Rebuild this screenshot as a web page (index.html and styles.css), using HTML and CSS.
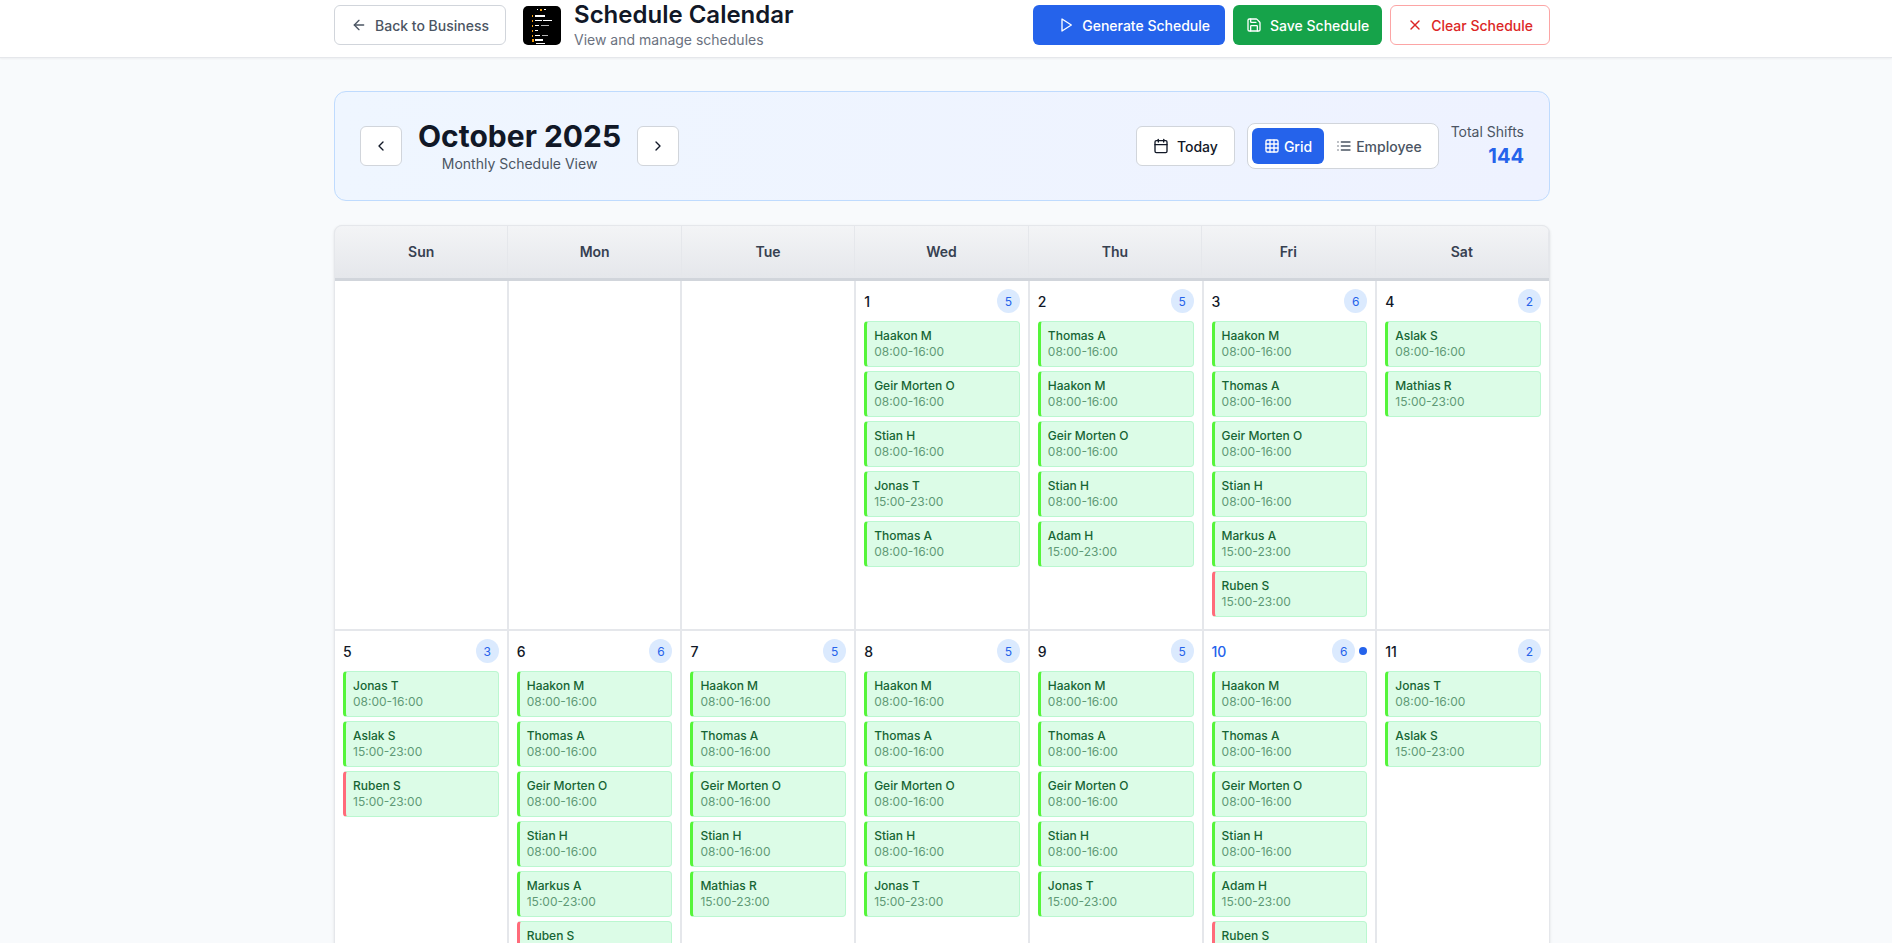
FILE: index.html
```html
<!DOCTYPE html>
<html lang="en">
<head>
    <meta charset="UTF-8">
    <meta name="viewport" content="width=device-width, initial-scale=1.0">
    <title>Schedule Calendar</title>
    <link rel="stylesheet" href="styles.css">
</head>
<body>
    <header class="topbar">
        <div class="wrap topbar_inner">
            <div class="topbar_left">
                <button class="btn btn_outline">
                    <svg class="icon" viewBox="0 0 24 24"><path d="m12 19-7-7 7-7"/><path d="M19 12H5"/></svg>
                    Back to Business
                </button>
                <svg class="logo" viewBox="0 0 38 39">
                    <rect width="38" height="39" rx="5" fill="#000"/>
                    <g fill="#f59e0b">
                        <rect x="17" y="3" width="2" height="2"/>
                        <rect x="9" y="9" width="1" height="2"/>
                        <rect x="9" y="14" width="1" height="2"/>
                        <rect x="9" y="19" width="1" height="2"/>
                        <rect x="9" y="24" width="1" height="2"/>
                        <rect x="9" y="29" width="1" height="2"/>
                        <rect x="9" y="33" width="2" height="3"/>
                    </g>
                    <g fill="#fff">
                        <rect x="14" y="3" width="1" height="1"/>
                        <rect x="21" y="3" width="2" height="1"/>
                        <rect x="12" y="9" width="10" height="2"/>
                        <rect x="12" y="14" width="7" height="1"/>
                        <rect x="20" y="14" width="9" height="1"/>
                        <rect x="12" y="19" width="4" height="1"/>
                        <rect x="18" y="19" width="8" height="1" opacity=".7"/>
                        <rect x="12" y="24" width="3" height="1"/>
                        <rect x="12" y="29" width="5" height="1"/>
                        <rect x="19" y="29" width="6" height="1" opacity=".7"/>
                        <rect x="12" y="33" width="8" height="2"/>
                        <rect x="13" y="37" width="9" height="1"/>
                    </g>
                </svg>
                <div>
                    <h1 class="page_title">Schedule Calendar</h1>
                    <p class="page_sub">View and manage schedules</p>
                </div>
            </div>
            <div class="topbar_right">
                <button class="btn btn_blue">
                    <svg class="icon" viewBox="0 0 24 24"><path d="M6 3v18l14-9z"/></svg>
                    Generate Schedule
                </button>
                <button class="btn btn_green">
                    <svg class="icon" viewBox="0 0 24 24"><path d="M15.2 3a2 2 0 0 1 1.4.6l3.8 3.8a2 2 0 0 1 .6 1.4V19a2 2 0 0 1-2 2H5a2 2 0 0 1-2-2V5a2 2 0 0 1 2-2z"/><path d="M17 21v-7a1 1 0 0 0-1-1H8a1 1 0 0 0-1 1v7"/><path d="M7 3v4a1 1 0 0 0 1 1h7"/></svg>
                    Save Schedule
                </button>
                <button class="btn btn_danger">
                    <svg class="icon" viewBox="0 0 24 24"><path d="M18 6 6 18"/><path d="m6 6 12 12"/></svg>
                    Clear Schedule
                </button>
            </div>
        </div>
    </header>

    <main class="wrap content">
        <section class="month_panel">
            <div class="month_nav">
                <button class="btn btn_square">
                    <svg class="icon" viewBox="0 0 24 24"><path d="m15 18-6-6 6-6"/></svg>
                </button>
                <div class="month_label">
                    <h2 class="month_title">October 2025</h2>
                    <p class="month_sub">Monthly Schedule View</p>
                </div>
                <button class="btn btn_square">
                    <svg class="icon" viewBox="0 0 24 24"><path d="m9 18 6-6-6-6"/></svg>
                </button>
            </div>
            <div class="month_tools">
                <button class="btn btn_today">
                    <svg class="icon" viewBox="0 0 24 24"><path d="M8 2v4"/><path d="M16 2v4"/><rect x="3" y="4" width="18" height="18" rx="2"/><path d="M3 10h18"/></svg>
                    Today
                </button>
                <div class="view_toggle">
                    <button class="toggle_btn toggle_active">
                        <svg class="icon" viewBox="0 0 24 24"><rect x="3" y="3" width="18" height="18" rx="2"/><path d="M3 9h18"/><path d="M3 15h18"/><path d="M9 3v18"/><path d="M15 3v18"/></svg>
                        Grid
                    </button>
                    <button class="toggle_btn">
                        <svg class="icon" viewBox="0 0 24 24"><path d="M3 12h.01"/><path d="M3 18h.01"/><path d="M3 6h.01"/><path d="M8 12h13"/><path d="M8 18h13"/><path d="M8 6h13"/></svg>
                        Employee
                    </button>
                </div>
                <div class="total">
                    <p class="total_label">Total Shifts</p>
                    <p class="total_value">144</p>
                </div>
            </div>
        </section>

        <section class="calendar">
            <div class="weekdays">
                <div class="weekday">Sun</div>
                <div class="weekday">Mon</div>
                <div class="weekday">Tue</div>
                <div class="weekday">Wed</div>
                <div class="weekday">Thu</div>
                <div class="weekday">Fri</div>
                <div class="weekday">Sat</div>
            </div>
            <div class="days">
                <div class="day"></div>
                <div class="day"></div>
                <div class="day"></div>

                <div class="day">
                    <div class="day_head"><span class="day_num">1</span><span class="day_count">5</span></div>
                    <div class="shift"><span class="shift_name">Haakon M</span><span class="shift_time">08:00-16:00</span></div>
                    <div class="shift"><span class="shift_name">Geir Morten O</span><span class="shift_time">08:00-16:00</span></div>
                    <div class="shift"><span class="shift_name">Stian H</span><span class="shift_time">08:00-16:00</span></div>
                    <div class="shift"><span class="shift_name">Jonas T</span><span class="shift_time">15:00-23:00</span></div>
                    <div class="shift"><span class="shift_name">Thomas A</span><span class="shift_time">08:00-16:00</span></div>
                </div>
                <div class="day">
                    <div class="day_head"><span class="day_num">2</span><span class="day_count">5</span></div>
                    <div class="shift"><span class="shift_name">Thomas A</span><span class="shift_time">08:00-16:00</span></div>
                    <div class="shift"><span class="shift_name">Haakon M</span><span class="shift_time">08:00-16:00</span></div>
                    <div class="shift"><span class="shift_name">Geir Morten O</span><span class="shift_time">08:00-16:00</span></div>
                    <div class="shift"><span class="shift_name">Stian H</span><span class="shift_time">08:00-16:00</span></div>
                    <div class="shift"><span class="shift_name">Adam H</span><span class="shift_time">15:00-23:00</span></div>
                </div>
                <div class="day">
                    <div class="day_head"><span class="day_num">3</span><span class="day_count">6</span></div>
                    <div class="shift"><span class="shift_name">Haakon M</span><span class="shift_time">08:00-16:00</span></div>
                    <div class="shift"><span class="shift_name">Thomas A</span><span class="shift_time">08:00-16:00</span></div>
                    <div class="shift"><span class="shift_name">Geir Morten O</span><span class="shift_time">08:00-16:00</span></div>
                    <div class="shift"><span class="shift_name">Stian H</span><span class="shift_time">08:00-16:00</span></div>
                    <div class="shift"><span class="shift_name">Markus A</span><span class="shift_time">15:00-23:00</span></div>
                    <div class="shift shift_red"><span class="shift_name">Ruben S</span><span class="shift_time">15:00-23:00</span></div>
                </div>
                <div class="day">
                    <div class="day_head"><span class="day_num">4</span><span class="day_count">2</span></div>
                    <div class="shift"><span class="shift_name">Aslak S</span><span class="shift_time">08:00-16:00</span></div>
                    <div class="shift"><span class="shift_name">Mathias R</span><span class="shift_time">15:00-23:00</span></div>
                </div>

                <div class="day">
                    <div class="day_head"><span class="day_num">5</span><span class="day_count">3</span></div>
                    <div class="shift"><span class="shift_name">Jonas T</span><span class="shift_time">08:00-16:00</span></div>
                    <div class="shift"><span class="shift_name">Aslak S</span><span class="shift_time">15:00-23:00</span></div>
                    <div class="shift shift_red"><span class="shift_name">Ruben S</span><span class="shift_time">15:00-23:00</span></div>
                </div>
                <div class="day">
                    <div class="day_head"><span class="day_num">6</span><span class="day_count">6</span></div>
                    <div class="shift"><span class="shift_name">Haakon M</span><span class="shift_time">08:00-16:00</span></div>
                    <div class="shift"><span class="shift_name">Thomas A</span><span class="shift_time">08:00-16:00</span></div>
                    <div class="shift"><span class="shift_name">Geir Morten O</span><span class="shift_time">08:00-16:00</span></div>
                    <div class="shift"><span class="shift_name">Stian H</span><span class="shift_time">08:00-16:00</span></div>
                    <div class="shift"><span class="shift_name">Markus A</span><span class="shift_time">15:00-23:00</span></div>
                    <div class="shift shift_red"><span class="shift_name">Ruben S</span><span class="shift_time">15:00-23:00</span></div>
                </div>
                <div class="day">
                    <div class="day_head"><span class="day_num">7</span><span class="day_count">5</span></div>
                    <div class="shift"><span class="shift_name">Haakon M</span><span class="shift_time">08:00-16:00</span></div>
                    <div class="shift"><span class="shift_name">Thomas A</span><span class="shift_time">08:00-16:00</span></div>
                    <div class="shift"><span class="shift_name">Geir Morten O</span><span class="shift_time">08:00-16:00</span></div>
                    <div class="shift"><span class="shift_name">Stian H</span><span class="shift_time">08:00-16:00</span></div>
                    <div class="shift"><span class="shift_name">Mathias R</span><span class="shift_time">15:00-23:00</span></div>
                </div>
                <div class="day">
                    <div class="day_head"><span class="day_num">8</span><span class="day_count">5</span></div>
                    <div class="shift"><span class="shift_name">Haakon M</span><span class="shift_time">08:00-16:00</span></div>
                    <div class="shift"><span class="shift_name">Thomas A</span><span class="shift_time">08:00-16:00</span></div>
                    <div class="shift"><span class="shift_name">Geir Morten O</span><span class="shift_time">08:00-16:00</span></div>
                    <div class="shift"><span class="shift_name">Stian H</span><span class="shift_time">08:00-16:00</span></div>
                    <div class="shift"><span class="shift_name">Jonas T</span><span class="shift_time">15:00-23:00</span></div>
                </div>
                <div class="day">
                    <div class="day_head"><span class="day_num">9</span><span class="day_count">5</span></div>
                    <div class="shift"><span class="shift_name">Haakon M</span><span class="shift_time">08:00-16:00</span></div>
                    <div class="shift"><span class="shift_name">Thomas A</span><span class="shift_time">08:00-16:00</span></div>
                    <div class="shift"><span class="shift_name">Geir Morten O</span><span class="shift_time">08:00-16:00</span></div>
                    <div class="shift"><span class="shift_name">Stian H</span><span class="shift_time">08:00-16:00</span></div>
                    <div class="shift"><span class="shift_name">Jonas T</span><span class="shift_time">15:00-23:00</span></div>
                </div>
                <div class="day">
                    <div class="day_head"><span class="day_num day_today">10</span><span class="day_badges"><span class="day_count">6</span><span class="today_dot"></span></span></div>
                    <div class="shift"><span class="shift_name">Haakon M</span><span class="shift_time">08:00-16:00</span></div>
                    <div class="shift"><span class="shift_name">Thomas A</span><span class="shift_time">08:00-16:00</span></div>
                    <div class="shift"><span class="shift_name">Geir Morten O</span><span class="shift_time">08:00-16:00</span></div>
                    <div class="shift"><span class="shift_name">Stian H</span><span class="shift_time">08:00-16:00</span></div>
                    <div class="shift"><span class="shift_name">Adam H</span><span class="shift_time">15:00-23:00</span></div>
                    <div class="shift shift_red"><span class="shift_name">Ruben S</span><span class="shift_time">15:00-23:00</span></div>
                </div>
                <div class="day">
                    <div class="day_head"><span class="day_num">11</span><span class="day_count">2</span></div>
                    <div class="shift"><span class="shift_name">Jonas T</span><span class="shift_time">08:00-16:00</span></div>
                    <div class="shift"><span class="shift_name">Aslak S</span><span class="shift_time">15:00-23:00</span></div>
                </div>
            </div>
        </section>
    </main>
</body>
</html>
```

FILE: styles.css
```css
html, body {
    height: 100vh;
    overflow: hidden;
}

body {
    margin: 0;
    padding: 0;
    font-family: Inter, "Liberation Sans", sans-serif;
    background-color: #f8fafc;
    color: #111827;
}

h1, h2, p {
    margin: 0;
}

button {
    font-family: inherit;
    cursor: pointer;
}

.wrap {
    width: 1216px;
    margin-left: 334px;
}

.icon {
    width: 16px;
    height: 16px;
    flex-shrink: 0;
    fill: none;
    stroke: currentColor;
    stroke-width: 2;
    stroke-linecap: round;
    stroke-linejoin: round;
}

/* top bar */
.topbar {
    height: 57px;
    background-color: #fff;
    border-bottom: 1px solid #e5e7eb;
    box-shadow: 0 1px 2px rgba(0, 0, 0, 0.05);
}

.topbar_inner {
    display: flex;
    justify-content: space-between;
    padding-top: 5px;
}

.topbar_left {
    display: flex;
    align-items: flex-start;
}

.topbar_right {
    display: flex;
    gap: 8px;
}

.logo {
    width: 38px;
    height: 39px;
    margin: 1px 13px 0 17px;
}

.page_title {
    font-size: 24px;
    line-height: 24px;
    font-weight: 600;
    color: #111827;
    margin-top: -2px;
}

.page_sub {
    font-size: 14px;
    line-height: 20px;
    color: #6b7280;
    margin-top: 3px;
}

/* buttons */
.btn {
    display: flex;
    align-items: center;
    gap: 8px;
    height: 40px;
    padding: 0 16px;
    border: 1px solid transparent;
    border-radius: 6px;
    font-size: 14px;
    font-weight: 500;
    background-color: #fff;
}

.btn_outline {
    border-color: #d1d5db;
    color: #4b5563;
}

.btn_outline .icon {
    stroke: #4b5563;
}

.btn_blue {
    background-color: #2563eb;
    color: #fff;
    padding: 0 14px 0 24px;
}

.btn_green {
    background-color: #16a34a;
    color: #fff;
    padding: 0 12px;
}

.btn_danger {
    border-color: #fca5a5;
    color: #dc2626;
}

.btn_square {
    width: 42px;
    padding: 0;
    justify-content: center;
    border-color: #d1d5db;
    color: #111827;
}

.btn_today {
    border-color: #d1d5db;
    color: #111827;
}

/* month panel */
.month_panel {
    display: flex;
    justify-content: space-between;
    align-items: center;
    height: 110px;
    box-sizing: border-box;
    margin-top: 33px;
    padding: 0 25px;
    border: 1px solid #bfdbfe;
    border-radius: 12px;
    background: linear-gradient(to right, #eff6ff, #eef2ff);
}

.month_nav {
    display: flex;
    align-items: center;
    gap: 16px;
}

.month_label {
    text-align: center;
}

.month_title {
    font-size: 30px;
    line-height: 36px;
    font-weight: 700;
    color: #111827;
}

.month_sub {
    font-size: 14px;
    line-height: 20px;
    color: #4b5563;
}

.month_tools {
    display: flex;
    align-items: center;
    gap: 12px;
}

.view_toggle {
    display: flex;
    padding: 4px;
    border: 1px solid #d1d5db;
    border-radius: 8px;
    background-color: #fff;
}

.toggle_btn {
    display: flex;
    align-items: center;
    gap: 4px;
    height: 36px;
    padding: 0 12px;
    border: 0;
    border-radius: 6px;
    background: none;
    font-size: 14px;
    font-weight: 500;
    color: #4b5563;
}

.toggle_active {
    background-color: #2563eb;
    color: #fff;
}

.total {
    text-align: right;
}

.total_label {
    font-size: 14px;
    line-height: 20px;
    color: #4b5563;
}

.total_value {
    font-size: 20px;
    line-height: 28px;
    font-weight: 700;
    color: #2563eb;
}

/* calendar */
.calendar {
    margin-top: 24px;
    border: 1px solid #e5e7eb;
    border-radius: 8px 8px 0 0;
    background-color: #e5e7eb;
    box-shadow: 0 1px 3px rgba(0, 0, 0, 0.1);
    overflow: hidden;
}

.weekdays {
    display: grid;
    grid-template-columns: repeat(7, 1fr);
    border-bottom: 3px solid #d1d5db;
    background: linear-gradient(to bottom, #f3f4f6, #e5e7eb);
}

.weekday {
    height: 52px;
    line-height: 52px;
    text-align: center;
    font-size: 14px;
    font-weight: 600;
    color: #374151;
    border-right: 1px solid #e5e7eb;
}

.days {
    display: grid;
    grid-template-columns: repeat(7, 1fr);
    gap: 2px;
}

.day {
    padding: 8px;
    background-color: #fff;
}

.day_head {
    display: flex;
    justify-content: space-between;
    align-items: center;
    height: 24px;
    margin-bottom: 8px;
}

.day_num {
    font-size: 14px;
    font-weight: 500;
    color: #111827;
}

.day_today {
    color: #2563eb;
}

.day_count {
    display: flex;
    justify-content: center;
    align-items: center;
    width: 23px;
    height: 24px;
    border-radius: 50%;
    background-color: #dbeafe;
    color: #2563eb;
    font-size: 12px;
}

.day_badges {
    display: flex;
    align-items: center;
    gap: 4px;
}

.today_dot {
    width: 8px;
    height: 8px;
    border-radius: 50%;
    background-color: #2563eb;
}

.shift {
    display: flex;
    flex-direction: column;
    justify-content: center;
    box-sizing: border-box;
    height: 46px;
    margin-bottom: 4px;
    padding-left: 7px;
    border: 1px solid #bbf7d0;
    border-left: 3px solid #55f53a;
    border-radius: 4px;
    background-color: #dcfce7;
    font-size: 12px;
    line-height: 16px;
}

.shift_red {
    border-left-color: #ff6b7a;
}

.shift_name {
    font-weight: 500;
    color: #166534;
}

.shift_time {
    color: #5f9a76;
}
```
